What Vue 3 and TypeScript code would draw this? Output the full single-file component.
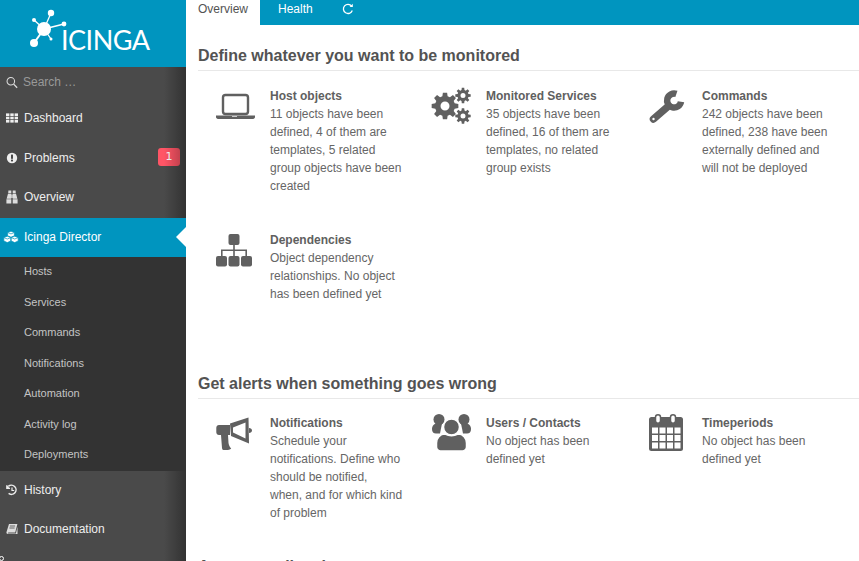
<template>
  <div class="page">
    <aside class="sidebar">
      <div class="logo">
        <svg class="logo__mark" width="70" height="50" viewBox="0 0 70 50">
          <g stroke="#fff" stroke-width="1.3">
            <line x1="44" y1="29" x2="51" y2="13" />
            <line x1="44" y1="29" x2="64" y2="24" />
            <line x1="44" y1="29" x2="34" y2="20" />
            <line x1="44" y1="29" x2="34" y2="43" stroke-width="2" />
            <line x1="44" y1="29" x2="51" y2="39" />
          </g>
          <g fill="#fff">
            <circle cx="44" cy="29" r="7" />
            <circle cx="51" cy="13" r="3.2" />
            <circle cx="64" cy="24" r="2.4" />
            <circle cx="34" cy="20" r="2" />
            <circle cx="34" cy="43" r="4" />
            <circle cx="51" cy="39" r="1.5" />
          </g>
        </svg>
        <span class="logo__text">ICINGA</span>
      </div>

      <div class="nav">
        <div class="search">
          <svg class="nav-icon" viewBox="0 0 14 14" fill="none" stroke="#ddd" stroke-width="1.2">
            <circle cx="5.6" cy="5.6" r="4.4" />
            <line x1="8.9" y1="8.9" x2="13" y2="13" stroke-width="1.6" />
          </svg>
          <span>Search …</span>
        </div>

        <a class="item">
          <svg class="nav-icon" viewBox="0 0 12 12" fill="#eee">
            <rect v-for="c in thCells" :key="c.x + '-' + c.y" :x="c.x" :y="c.y" width="3.4" height="2.6" />
          </svg>
          Dashboard
        </a>
        <a class="item">
          <svg class="nav-icon" viewBox="0 0 12 12">
            <circle cx="6" cy="6" r="5.2" fill="#eee" />
            <rect x="5" y="2.6" width="2" height="4.2" fill="#484848" />
            <rect x="5" y="7.6" width="2" height="1.8" fill="#484848" />
          </svg>
          Problems
          <span class="badge">1</span>
        </a>
        <a class="item">
          <svg class="nav-icon nav-icon--tall" viewBox="0 0 12 14" fill="#ddd">
            <path d="M2.4 .5h2.900v2.700H2.200zM6.700 .5h2.900l.2 2.700H6.700z" />
            <path d="M2 3.800h3.300v5H.6zM6.700 3.800H10l1.400 5H6.700z" />
            <path d="M.4 9.300h4.900v4.200H.4zM6.700 9.300h4.900v4.200H6.700zM5.300 4.500h1.400v3.500H5.300z" />
          </svg>
          Overview
        </a>
        <a class="item item--active">
          <svg class="nav-icon nav-icon--wide" viewBox="0 0 16 12" stroke="#0095bf" stroke-width=".7" stroke-linejoin="round" fill="#fff">
            <path d="M8 .2l3.400 1.300v3.300L8 6.200 4.600 4.800V1.500z" />
            <path d="M4.300 5.200l3.500 1.400v3.400l-3.500 1.600L.8 10V6.600z" />
            <path d="M11.700 5.200l3.500 1.400v3.400l-3.500 1.600L8.200 10V6.600z" />
            <path d="M4.600 1.500L8 2.900l3.400-1.400M.8 6.600l3.500 1.400 3.500-1.400M8.200 6.600l3.500 1.400 3.500-1.400" fill="none" />
          </svg>
          Icinga Director
        </a>
        <div class="submenu">
          <a v-for="sub in subItems" :key="sub" class="submenu__link">{{ sub }}</a>
        </div>
        <a class="item">
          <svg class="nav-icon" viewBox="0 0 12 12" fill="none" stroke="#eee" stroke-width="1.5">
            <path d="M2.300 2.400A4.600 4.600 0 1 1 2.600 9.400" />
            <path d="M.8 1.200v3.200H4" stroke-width="1.200" fill="#eee" />
            <path d="M6 3.500v3H8.200" stroke-width="1.200" />
          </svg>
          History
        </a>
        <a class="item">
          <svg class="nav-icon" viewBox="0 0 12 12">
            <path d="M3 1h8.400L9.200 9.400H2.600c-.8 0-1 .9-.3 1h7.600l1.600-6.600v7.200H2c-1.200 0-1.800-.9-1.500-2z" fill="#ddd" />
            <path d="M3.900 3h5.200M3.400 5h5.200" stroke="#484848" stroke-width=".8" />
          </svg>
          Documentation
        </a>
        <span class="corner-dot" />
      </div>
    </aside>

    <main class="main">
      <div class="tabs">
        <a class="tab tab--active">Overview</a>
        <a class="tab">Health</a>
        <a class="tab tab--icon">
          <svg width="12" height="12" viewBox="0 0 12 12" fill="none" stroke="#fff" stroke-width="1.300">
            <path d="M10.300 7.600A4.600 4.600 0 1 1 9.600 3" />
            <path d="M10.800 .8v3.200H7.600z" fill="#fff" stroke="none" />
          </svg>
        </a>
      </div>

      <div class="content">
        <section class="group">
          <h1>Define whatever you want to be monitored</h1>
          <div class="grid">
            <div class="card">
              <svg class="card__icon" viewBox="0 0 72 60">
                <rect x="25" y="8" width="25" height="19" rx="2.500" fill="none" stroke="#606060" stroke-width="2.400" />
                <path d="M18 28.500h39v1.600c0 1-.8 1.900-2 1.900H20c-1.200 0-2-.9-2-1.900z" fill="#606060" />
                <rect x="34" y="29" width="5" height="1" fill="#ccc" />
              </svg>
              <div class="card__body">
                <strong>Host objects</strong>
                <p>11 objects have been defined, 4 of them are templates, 5 related group objects have been created</p>
              </div>
            </div>
            <div class="card">
              <svg class="card__icon" viewBox="0 0 72 60">
                <path :d="gearBig" fill="#606060" fill-rule="evenodd" />
                <path :d="gearTop" fill="#606060" fill-rule="evenodd" />
                <path :d="gearBottom" fill="#606060" fill-rule="evenodd" />
              </svg>
              <div class="card__body">
                <strong>Monitored Services</strong>
                <p>35 objects have been defined, 16 of them are templates, no related group exists</p>
              </div>
            </div>
            <div class="card">
              <svg class="card__icon" viewBox="0 0 72 60">
                <path d="M46.400 6.900A7 7 0 1 0 51 14.700" fill="none" stroke="#606060" stroke-width="6.500" />
                <line x1="38.500" y1="19" x2="23.500" y2="32" stroke="#606060" stroke-width="7.500" stroke-linecap="round" />
                <circle cx="23.500" cy="32" r="1.200" fill="#fff" />
              </svg>
              <div class="card__body">
                <strong>Commands</strong>
                <p>242 objects have been defined, 238 have been externally defined and will not be deployed</p>
              </div>
            </div>
            <div class="card">
              <svg class="card__icon" viewBox="0 0 72 60">
                <g fill="#606060">
                  <rect x="30.500" y="3" width="11" height="11" rx="2" />
                  <rect x="18" y="25" width="11" height="10.500" rx="2" />
                  <rect x="30.500" y="25" width="11" height="10.500" rx="2" />
                  <rect x="43" y="25" width="11" height="10.500" rx="2" />
                  <path d="M35.200 14h1.600v4.500H49v6.500h-1.600v-4.900H36.800V25h-1.600v-4.900H24.600V25H23v-6.500h12.200z" />
                </g>
              </svg>
              <div class="card__body">
                <strong>Dependencies</strong>
                <p>Object dependency relationships. No object has been defined yet</p>
              </div>
            </div>
          </div>
        </section>

        <section class="group group--short">
          <h1>Get alerts when something goes wrong</h1>
          <div class="grid">
            <div class="card">
              <svg class="card__icon" viewBox="0 0 72 60">
                <g fill="#606060">
                  <path d="M21 11h11v10H21c-1.600 0-2.700-1.200-2.700-2.700v-4.600c0-1.500 1.100-2.700 2.700-2.700z" />
                  <path d="M32 9.500L50.500 3.500 51 29.500 33 22zM35 13.500v5l12.500 6V8.500z" fill-rule="evenodd" />
                  <path d="M51 14c1.700 0 3 1.100 3 2.500S52.700 19 51 19z" />
                  <path d="M23 21h7l.5 8c.4 2.400 1.500 4.200 2.700 5.500-1 1-3.200 1.500-4.700 1.500h-3c-1-.1-1.300-.7-1.500-2z" />
                </g>
              </svg>
              <div class="card__body">
                <strong>Notifications</strong>
                <p>Schedule your notifications. Define who should be notified, when,&nbsp;and for which kind of problem</p>
              </div>
            </div>
            <div class="card">
              <svg class="card__icon" viewBox="0 0 72 60">
                <g fill="#606060">
                  <circle cx="25" cy="5.500" r="5.500" />
                  <circle cx="50" cy="5.500" r="5.500" />
                  <path d="M18 15c0-3.400 2.400-5.500 5-5.500h5l-2 10h-4c-2.500 0-4-1.500-4-4.500z" />
                  <path d="M57 15c0-3.400-2.400-5.500-5-5.500h-5l2 10h4c2.500 0 4-1.500 4-4.500z" />
                  <g stroke="#fff" stroke-width="1.500">
                    <circle cx="37.500" cy="13" r="8" />
                    <path d="M22.500 29c0-5 3.500-9 8.500-9 4 2 9 2 13 0 5 0 8.500 4 8.500 9v4c0 2-2 4-4 4H26.500c-2 0-4-2-4-4z" />
                  </g>
                </g>
              </svg>
              <div class="card__body">
                <strong>Users / Contacts</strong>
                <p>No object has been defined yet</p>
              </div>
            </div>
            <div class="card">
              <svg class="card__icon" viewBox="0 0 72 60">
                <rect x="19" y="3" width="34" height="34" rx="2.500" fill="#606060" />
                <g fill="#fff">
                  <rect v-for="c in calendarCells" :key="c.x + '-' + c.y" :x="c.x" :y="c.y" width="6" height="6" />
                </g>
                <g fill="#fff" stroke="#606060" stroke-width="1.500">
                  <rect x="25.500" y=".8" width="5" height="8.500" rx="2.500" />
                  <rect x="40.500" y=".8" width="5" height="8.500" rx="2.500" />
                </g>
              </svg>
              <div class="card__body">
                <strong>Timeperiods</strong>
                <p>No object has been defined yet</p>
              </div>
            </div>
          </div>
        </section>

        <section class="group">
          <h1>Automate all tasks</h1>
        </section>
      </div>
    </main>
  </div>
</template>

<script setup lang="ts">
const subItems: string[] = ['Hosts', 'Services', 'Commands', 'Notifications', 'Automation', 'Activity log', 'Deployments']

interface Cell { x: number; y: number }

const thCells: Cell[] = []
for (const y of [1.4, 4.7, 8]) {
  for (const x of [0, 4.3, 8.6]) thCells.push({ x, y })
}

const calendarCells: Cell[] = []
for (const y of [13.5, 21, 28.5]) {
  for (const x of [22, 29.5, 37, 44.5]) calendarCells.push({ x, y })
}

// cog outline with a round hole, teeth as trapezoids
function gear(cx: number, cy: number, outer: number, inner: number, hole: number, teeth: number): string {
  const pts: string[] = []
  const step = (Math.PI * 2) / teeth
  for (let i = 0; i < teeth; i++) {
    const a = i * step - Math.PI / 2
    const corners: [number, number][] = [
      [inner, a - step * 0.34],
      [outer, a - step * 0.2],
      [outer, a + step * 0.2],
      [inner, a + step * 0.34],
    ]
    for (const [r, t] of corners) {
      pts.push(`${(cx + r * Math.cos(t)).toFixed(2)} ${(cy + r * Math.sin(t)).toFixed(2)}`)
    }
  }
  const circle = `M${cx - hole} ${cy}a${hole} ${hole} 0 1 0 ${hole * 2} 0a${hole} ${hole} 0 1 0 ${-hole * 2} 0z`
  return `M${pts.join('L')}z${circle}`
}

const gearBig = gear(31, 19, 13.5, 10, 4.5, 8)
const gearTop = gear(49, 8.5, 7.8, 5.6, 2.5, 8)
const gearBottom = gear(49, 29, 7.8, 5.6, 2.5, 8)
</script>

<style>
html, body { height: 100%; overflow: hidden; background: #fff; }
</style>

<style scoped>
.page { display: flex; height: 100vh; overflow: hidden; background: #fff; color: #535353; font-family: "Liberation Sans", Arial, sans-serif; font-size: 12px; }

.sidebar { display: flex; flex: 0 0 186px; flex-direction: column; width: 186px; }
.logo { position: relative; flex: 0 0 67px; background: #0095bf; }
.logo__mark { position: absolute; top: 0; left: 0; }
.logo__text { position: absolute; top: 22px; left: 61px; color: #fff; font-family: Lato, sans-serif; font-size: 27px; line-height: 36px; letter-spacing: -.5px; }

.nav { position: relative; flex: 1; background: #4a4a4a; color: #eee; }
.nav::after { position: absolute; inset: 0 0 0 auto; width: 22px; background: linear-gradient(to right, rgba(0, 0, 0, 0), rgba(0, 0, 0, .32)); content: ""; pointer-events: none; }
.nav-icon { flex: 0 0 12px; width: 12px; height: 12px; margin-right: 6px; }
.nav-icon--tall { height: 14px; }
.nav-icon--wide { flex-basis: 16px; width: 16px; margin-right: 5px; margin-left: -3px; }

.search { display: flex; align-items: center; height: 32px; padding: 0 0 2px 6px; box-sizing: border-box; color: #999; }
.search .nav-icon { width: 13px; height: 13px; margin-right: 5px; }

.item { display: flex; position: relative; align-items: center; height: 39.5px; padding: 0 0 1px 6px; box-sizing: border-box; }
.item--active { z-index: 1; padding: 0 0 0 6px; background: #0095bf; color: #fff; }
.item--active::after { position: absolute; top: 9px; right: 0; border-top: 10px solid transparent; border-right: 10px solid #fff; border-bottom: 10px solid transparent; content: ""; }

.badge { position: absolute; top: 9px; right: 6px; width: 22px; height: 18px; border-radius: 3px; background: #ff5566; color: #fff; font-family: "DejaVu Sans", sans-serif; font-size: 11px; line-height: 18px; text-align: center; }

.submenu { position: relative; z-index: 1; display: flex; flex-direction: column; background: #333; }
.submenu__link { height: 30.5px; padding-left: 24px; color: #c4c4c4; font-size: 11px; line-height: 29.5px; }

.corner-dot { position: absolute; bottom: 0; left: -1px; width: 3px; height: 3px; border: 1px solid #fff; border-radius: 50%; }

.main { flex: 1; min-width: 0; overflow: hidden; }
.tabs { display: flex; height: 25px; background: #0095bf; }
.tab { height: 25px; padding: 0 18px; color: #fff; line-height: 19px; }
.tab--active { padding: 0 12px; background: #fff; color: #535353; }
.tab--icon { padding: 3px 0 0 11px; }
.tab--icon svg { display: block; }

.content { padding: 23px 0 0 12px; }
.group { min-height: 328px; }
.group--short { min-height: 183px; }
.group h1 { margin: 0 0 16px; padding-bottom: 6px; border-bottom: 1px solid #e8e8e8; color: #535353; font-size: 16px; font-weight: 700; line-height: 16px; }
.group--short h1 { margin-bottom: 15px; }

.grid { display: grid; grid-template-columns: repeat(3, 216px); grid-auto-rows: 144px; }
.card { display: flex; }
.card__icon { flex: 0 0 72px; width: 72px; height: 60px; }
.card__body { width: 135px; line-height: 18px; }
.card__body strong { display: block; color: #606060; font-weight: 700; }
.card__body p { margin: 0; color: #666; }
</style>
